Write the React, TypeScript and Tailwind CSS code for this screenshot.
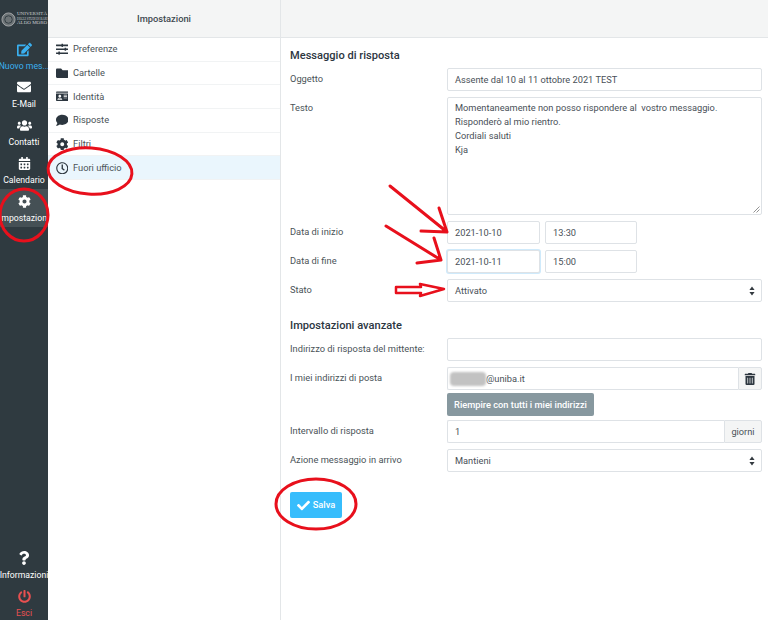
import type { ReactNode } from "react";
import {
  FaEdit,
  FaEnvelope,
  FaUsers,
  FaCalendarAlt,
  FaCog,
  FaQuestion,
  FaPowerOff,
  FaSlidersH,
  FaFolder,
  FaIdCard,
  FaComment,
  FaRegClock,
  FaTrashAlt,
  FaCheck,
} from "react-icons/fa";

const inputClass =
  "flex h-[23px] items-center rounded-[2px] border border-[#dee2e6] bg-white px-[7px] text-[9.25px] text-[#495057]";

function SideItem({ icon, label, active, className }: { icon: ReactNode; label: string; active?: boolean; className?: string }) {
  return (
    <div className={`flex h-[38px] flex-col items-center justify-center overflow-hidden ${active ? "bg-[#455055]" : ""} ${className ?? ""}`}>
      <div className="flex h-[17px] items-center text-[14px]">{icon}</div>
      <div className="mt-[2px] whitespace-nowrap text-[8.7px] leading-[12px]">{label}</div>
    </div>
  );
}

function MenuRow({ icon, label, active }: { icon: ReactNode; label: string; active?: boolean }) {
  return (
    <div className={`flex h-[23.7px] items-center border-b border-[#f1f3f4] pl-[7px] text-[9.3px] text-[#4a5358] ${active ? "bg-[#eaf6fd]" : ""}`}>
      <div className="flex w-[14px] justify-center text-[12.5px] text-[#2c363f]">{icon}</div>
      <span className="ml-[4px]">{label}</span>
    </div>
  );
}

function FormRow({ label, children }: { label: string; children: ReactNode }) {
  return (
    <div className="mb-[6px] flex">
      <div className="w-[157px] shrink-0 pt-[4px] text-[9.3px] leading-[14px] text-[#4a5358]">{label}</div>
      <div className="min-w-0 flex-1">{children}</div>
    </div>
  );
}

function Select({ value }: { value: string }) {
  return (
    <div className={`${inputClass} justify-between`}>
      <span>{value}</span>
      <svg width="6" height="10" viewBox="0 0 6 10" className="mr-[-1px]">
        <path d="M3 0.5 L5.6 4 H0.4 Z M3 9.5 L5.6 6 H0.4 Z" fill="#343a40" />
      </svg>
    </div>
  );
}

export default function App() {
  return (
    <div className="relative flex h-[620px] w-[768px] overflow-hidden bg-white font-['Roboto',sans-serif]">
      {/* sidebar */}
      <div className="flex w-[48px] shrink-0 flex-col justify-between bg-[#2f3a40] text-white">
        <div>
          <div className="flex h-[37px] items-center gap-[1px] overflow-hidden pl-[1px] pt-[1px] text-[#c9cccd]">
            <svg width="15" height="15" viewBox="0 0 16 16" className="shrink-0">
              <circle cx="8" cy="8" r="7" fill="#6d7477" stroke="#a4a8aa" strokeWidth="1" />
              <circle cx="8" cy="8" r="4" fill="none" stroke="#2f3a40" strokeWidth="1" />
            </svg>
            <div className="font-['Liberation_Serif',serif] text-[4px] leading-[4.6px] whitespace-nowrap">
              <div className="text-[5px]">UNIVERSITÀ</div>
              <div className="text-[3px]">DEGLI STUDI DI BARI</div>
              <div className="text-[5px]">ALDO MORO</div>
            </div>
          </div>
          <SideItem className="text-[#3ab0f0]" icon={<FaEdit className="text-[15px]" />} label="Nuovo mes..." />
          <SideItem icon={<FaEnvelope />} label="E-Mail" />
          <SideItem icon={<FaUsers className="text-[15px]" />} label="Contatti" />
          <SideItem icon={<FaCalendarAlt className="text-[13px]" />} label="Calendario" />
          <SideItem active icon={<FaCog className="text-[13px]" />} label="Impostazioni" />
        </div>
        <div className="-mb-[2px]">
          <SideItem icon={<FaQuestion />} label="Informazioni" />
          <SideItem className="text-[#e85050]" icon={<FaPowerOff className="text-[13px]" />} label="Esci" />
        </div>
      </div>

      {/* settings menu */}
      <div className="w-[233px] shrink-0 border-r border-[#e3e6e8]">
        <div className="flex h-[38px] items-center justify-center border-b border-[#e3e6e8] bg-[#f4f5f5] text-[9.3px] font-medium text-[#3f4a50]">
          Impostazioni
        </div>
        <MenuRow icon={<FaSlidersH />} label="Preferenze" />
        <MenuRow icon={<FaFolder />} label="Cartelle" />
        <MenuRow icon={<FaIdCard />} label="Identità" />
        <MenuRow icon={<FaComment />} label="Risposte" />
        <MenuRow icon={<FaCog />} label="Filtri" />
        <MenuRow active icon={<FaRegClock />} label="Fuori ufficio" />
      </div>

      {/* form */}
      <div className="min-w-0 flex-1">
        <div className="h-[38px] border-b border-[#e3e6e8] bg-[#f4f5f5]" />
        <div className="pl-[9px] pr-[6px]">
          <div className="mb-[5px] mt-[11px] text-[11.1px] font-medium leading-[14px] text-[#2c363f]">Messaggio di risposta</div>
          <FormRow label="Oggetto">
            <div className={inputClass}>Assente dal 10 al 11 ottobre 2021 TEST</div>
          </FormRow>
          <FormRow label="Testo">
            <div className="relative h-[118px] rounded-[2px] border border-[#dee2e6] px-[7px] py-[3px] text-[9.25px] leading-[14px] text-[#495057]">
              <div className="whitespace-pre">Momentaneamente non posso rispondere al  vostro messaggio.</div>
              <div>Risponderò al mio rientro.</div>
              <div>Cordiali saluti</div>
              <div>Kja</div>
              <svg width="7" height="7" viewBox="0 0 7 7" className="absolute bottom-[1px] right-[1px]">
                <path d="M0.5 6.5 L6.5 0.5 M3.5 6.5 L6.5 3.5" stroke="#777" strokeWidth="0.8" />
              </svg>
            </div>
          </FormRow>
          <FormRow label="Data di inizio">
            <div className="flex gap-[5px]">
              <div className={`${inputClass} w-[93px]`}>2021-10-10</div>
              <div className={`${inputClass} w-[92px]`}>13:30</div>
            </div>
          </FormRow>
          <FormRow label="Data di fine">
            <div className="flex gap-[5px]">
              <div className={`${inputClass} w-[93px] border-[#7cc8f5] shadow-[0_0_0_1px_#cfeafb]`}>2021-10-11</div>
              <div className={`${inputClass} w-[92px]`}>15:00</div>
            </div>
          </FormRow>
          <FormRow label="Stato">
            <Select value="Attivato" />
          </FormRow>

          <div className="mb-[5px] mt-[17px] text-[11.1px] font-medium leading-[14px] text-[#2c363f]">Impostazioni avanzate</div>
          <FormRow label="Indirizzo di risposta del mittente:">
            <div className={inputClass} />
          </FormRow>
          <FormRow label="I miei indirizzi di posta">
            <div className="flex">
              <div className={`${inputClass} flex-1 rounded-r-none border-r-0`}>
                <span className="-ml-[5px] h-[14px] w-[36px] rounded-[4px] bg-[#c2c2c2] blur-[1px]" />
                <span>@uniba.it</span>
              </div>
              <div className="flex h-[23px] w-[24px] items-center justify-center rounded-r-[2px] border border-[#dee2e6] bg-[#f4f5f5] text-[12px] text-[#2c363f]">
                <FaTrashAlt />
              </div>
            </div>
            <div className="mb-[-2px] mt-[3px] flex h-[23px] w-[147px] items-center justify-center whitespace-nowrap rounded-[2px] bg-[#87989f] text-[9.25px] font-medium text-white">
              Riempire con tutti i miei indirizzi
            </div>
          </FormRow>
          <FormRow label="Intervallo di risposta">
            <div className="flex">
              <div className={`${inputClass} flex-1 rounded-r-none border-r-0`}>1</div>
              <div className="flex h-[23px] w-[38px] items-center justify-center rounded-r-[2px] border border-[#dee2e6] bg-[#f4f5f5] text-[9.25px] text-[#4a5358]">
                giorni
              </div>
            </div>
          </FormRow>
          <FormRow label="Azione messaggio in arrivo">
            <Select value="Mantieni" />
          </FormRow>
          <div className="mt-[20px] flex h-[26px] w-[52px] items-center justify-center gap-[3px] rounded-[2px] bg-[#37bdfc] text-[9.25px] font-medium text-white">
            <FaCheck className="text-[13px]" />
            <span>Salva</span>
          </div>
        </div>
      </div>

      {/* red hand-drawn annotations over the screenshot */}
      <svg width="768" height="620" viewBox="0 0 768 620" className="pointer-events-none absolute left-0 top-0" fill="none" stroke="#e8101c" strokeWidth="3" strokeLinecap="round" strokeLinejoin="round">
        <ellipse cx="24" cy="215" rx="24" ry="26" />
        <ellipse cx="90" cy="171" rx="42" ry="23" transform="rotate(4 90 171)" />
        <ellipse cx="316" cy="504" rx="40" ry="25" />
        <path d="M390 186 L447 232 M439 208 L447 232 L421 231" />
        <path d="M386 226 L441 260 M434 238 L441 260 L417 263" />
        <path d="M396 287 H421 L420 284 L444 289 L420 296 L421 293 H396 Z" strokeWidth="2.5" />
      </svg>
    </div>
  );
}
